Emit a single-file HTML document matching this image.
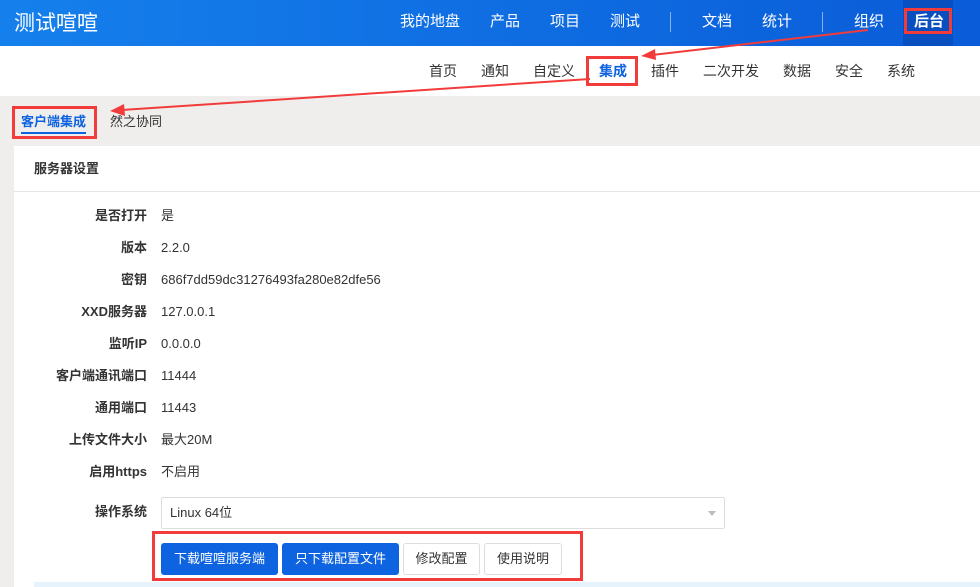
<!DOCTYPE html>
<html><head><meta charset="utf-8"><style>
*{margin:0;padding:0;box-sizing:border-box}
body{width:980px;height:587px;overflow:hidden;background:#efeeec;font-family:"Liberation Sans","Noto Sans CJK SC",sans-serif;font-size:13px;color:#333;position:relative}
.hd{position:absolute;left:0;top:0;width:980px;height:46px;background:linear-gradient(90deg,#1580ec,#0a5cd8)}
.logo{position:absolute;left:14px;top:7px;color:#fff;font-size:21px}
.nv{position:absolute;top:10px;color:#fff;font-size:15px}
.sep{position:absolute;top:12px;width:1px;height:20px;background:rgba(255,255,255,.5)}
.act{position:absolute;left:903px;top:0;width:50px;height:46px;background:#0a4fc0}
.sub{position:absolute;left:0;top:46px;width:980px;height:50px;background:#fff}
.sn{position:absolute;top:15px;font-size:14px;color:#333}
.box{position:absolute;border:3px solid #f23c3c}
.panel{position:absolute;left:14px;top:146px;width:966px;height:441px;background:#fff}
.ph{position:absolute;left:20px;top:12px;font-weight:bold;font-size:13px}
.line{position:absolute;left:0;top:45px;width:966px;height:1px;background:#e5e5e5}
.lb,.vl{line-height:18px;height:18px}
.lb{position:absolute;width:133px;text-align:right;font-weight:bold;left:14px}
.vl{position:absolute;left:161px}
.btn{position:absolute;top:543px;height:32px;border-radius:3px;font-size:13px;line-height:30px;text-align:center}
.bp{background:#0d63e0;color:#fff;border:1px solid #0d63e0}
.bd{background:#fff;color:#333;border:1px solid #ddd}
</style></head><body>
<div class="hd">
<div class="act"></div>
<div class="logo">测试喧喧</div>
<span class="nv" style="left:400px">我的地盘</span>
<span class="nv" style="left:490px">产品</span>
<span class="nv" style="left:550px">项目</span>
<span class="nv" style="left:610px">测试</span>
<div class="sep" style="left:670px"></div>
<span class="nv" style="left:702px">文档</span>
<span class="nv" style="left:762px">统计</span>
<div class="sep" style="left:822px"></div>
<span class="nv" style="left:854px">组织</span>
<span class="nv" style="left:914px;font-weight:bold">后台</span>
</div>
<div class="box" style="left:904px;top:8px;width:48px;height:26px"></div>
<div class="sub">
<span class="sn" style="left:429px">首页</span>
<span class="sn" style="left:481px">通知</span>
<span class="sn" style="left:533px">自定义</span>
<span class="sn" style="left:599px;color:#0d63e0;font-weight:bold">集成</span>
<span class="sn" style="left:651px">插件</span>
<span class="sn" style="left:703px">二次开发</span>
<span class="sn" style="left:783px">数据</span>
<span class="sn" style="left:835px">安全</span>
<span class="sn" style="left:887px">系统</span>
</div>
<div class="box" style="left:586px;top:56px;width:52px;height:30px"></div>
<span style="position:absolute;left:21px;top:111px;font-weight:bold;color:#0d63e0">客户端集成</span>
<div style="position:absolute;left:21px;top:132px;width:65px;height:2px;background:#0d63e0"></div>
<span style="position:absolute;left:110px;top:111px;color:#333">然之协同</span>
<div class="box" style="left:12px;top:106px;width:85px;height:33px"></div>
<div class="panel"><div class="ph">服务器设置</div><div class="line"></div></div>
<div class="lb" style="top:207px">是否打开</div><div class="vl" style="top:207px">是</div>
<div class="lb" style="top:239px">版本</div><div class="vl" style="top:239px">2.2.0</div>
<div class="lb" style="top:271px">密钥</div><div class="vl" style="top:271px">686f7dd59dc31276493fa280e82dfe56</div>
<div class="lb" style="top:303px">XXD服务器</div><div class="vl" style="top:303px">127.0.0.1</div>
<div class="lb" style="top:335px">监听IP</div><div class="vl" style="top:335px">0.0.0.0</div>
<div class="lb" style="top:367px">客户端通讯端口</div><div class="vl" style="top:367px">11444</div>
<div class="lb" style="top:399px">通用端口</div><div class="vl" style="top:399px">11443</div>
<div class="lb" style="top:431px">上传文件大小</div><div class="vl" style="top:431px">最大20M</div>
<div class="lb" style="top:463px">启用https</div><div class="vl" style="top:463px">不启用</div>
<div class="lb" style="top:503px">操作系统</div>
<div style="position:absolute;left:161px;top:497px;width:564px;height:32px;border:1px solid #ddd;border-radius:2px;padding:0 8px;line-height:30px">Linux 64位</div>
<div style="position:absolute;left:708px;top:511px;border-left:4px solid transparent;border-right:4px solid transparent;border-top:5px solid #bbb"></div>
<div class="btn bp" style="left:161px;width:117px">下载喧喧服务端</div>
<div class="btn bp" style="left:282px;width:117px">只下载配置文件</div>
<div class="btn bd" style="left:403px;width:77px">修改配置</div>
<div class="btn bd" style="left:484px;width:78px">使用说明</div>
<div class="box" style="left:152px;top:531px;width:431px;height:50px"></div>
<div style="position:absolute;left:34px;top:582px;width:946px;height:5px;background:#e6f3fc"></div>
<svg style="position:absolute;left:0;top:0" width="980" height="587">
<line x1="868" y1="30" x2="652" y2="55" stroke="#f23c3c" stroke-width="2"/>
<polygon points="641,56 655,49 656,60" fill="#f23c3c"/>
<line x1="590" y1="79" x2="122" y2="110" stroke="#f23c3c" stroke-width="2"/>
<polygon points="110,111 124,104 125,116" fill="#f23c3c"/>
</svg>
</body></html>
